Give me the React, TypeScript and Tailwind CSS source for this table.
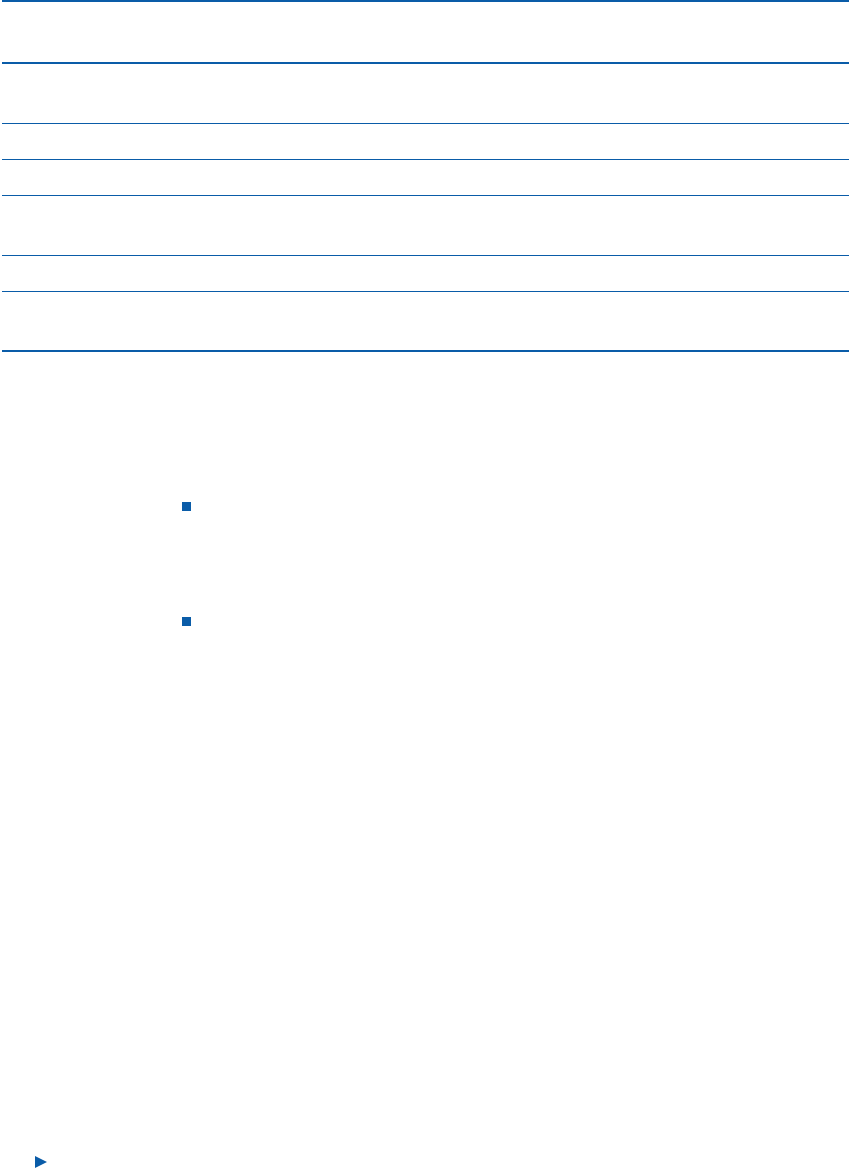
import React from "react";

export default function App() {
  const rows = [
    { h: "h-[62px]", b: "border-b-2" },
    { h: "h-[60px]", b: "border-b" },
    { h: "h-[36px]", b: "border-b" },
    { h: "h-[36px]", b: "border-b" },
    { h: "h-[60px]", b: "border-b" },
    { h: "h-[36px]", b: "border-b" },
    { h: "h-[60px]", b: "border-b-2" },
  ];
  return (
    <div className="w-[851px] h-[1169px] bg-white relative overflow-hidden" style={{ fontFamily: '"Liberation Sans", Arial, sans-serif' }}>
      <div className="ml-[2px] w-[847px] border-t-2 border-[#0a5ca8]">
        {rows.map((r, i) => (
          <div key={i} className={`${r.h} ${r.b} border-[#0a5ca8]`} />
        ))}
      </div>
      <div className="pl-[182px] pt-[150px] flex flex-col gap-[106px]">
        <div className="w-[9px] h-[9px] bg-[#0a5ca8]" />
        <div className="w-[9px] h-[9px] bg-[#0a5ca8]" />
      </div>
      <div className="pl-[35px] pt-[530px]">
        <svg width="12" height="12" viewBox="0 0 12 12">
          <polygon points="0,0 12,6 0,12" fill="#0a5ca8" />
        </svg>
      </div>
    </div>
  );
}
